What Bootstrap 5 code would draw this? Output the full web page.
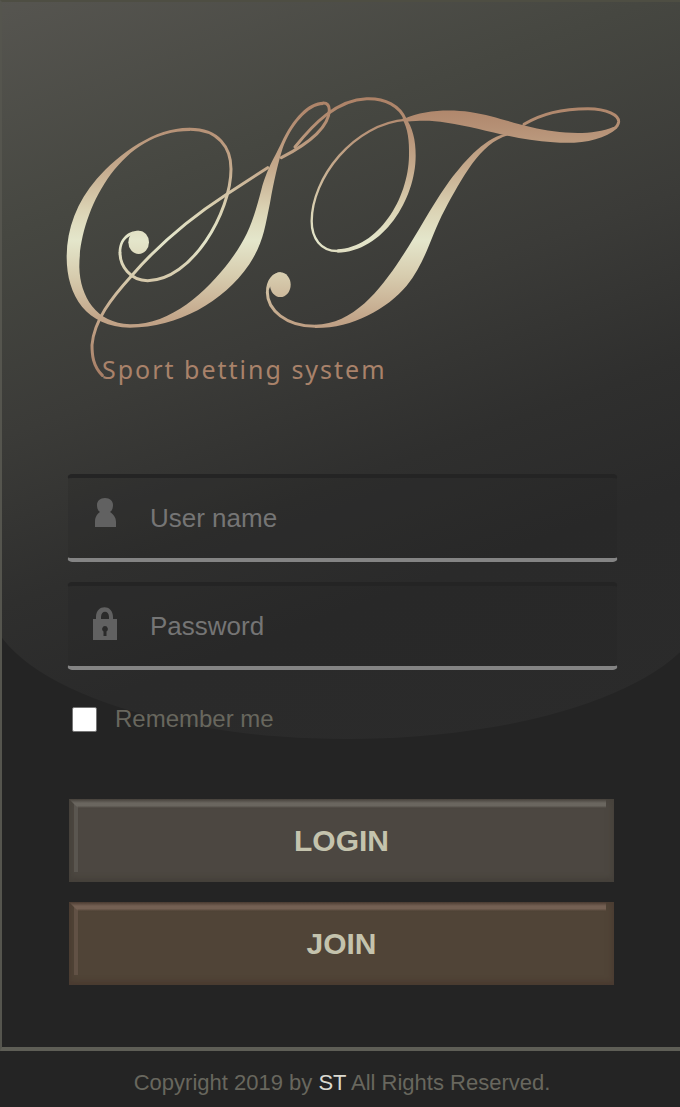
<!DOCTYPE html>
<html lang="en">
<head>
<meta charset="utf-8">
<meta name="viewport" content="width=device-width, initial-scale=1">
<title>ST - Sport betting system</title>
<link rel="stylesheet" href="https://cdn.jsdelivr.net/npm/bootstrap@5.3.0/dist/css/bootstrap.min.css">
<style>
  body { background: #242424; font-family: "Liberation Sans", Arial, sans-serif; color: #68675e; }
  .login-panel {
    isolation: isolate;
    border-left: 2px solid #55554e;
    border-top: 2px solid #4e4e43;
    border-bottom: 4px solid #5e5e56;
    padding: 92px 62px 62px 65px;
  }
  /* soft light falling from the top, ending in a wide curve */
  .login-panel::before {
    content: ""; position: absolute; z-index: -1; top: 0; left: -2%; width: 106%; height: 70.5%;
    border-radius: 0 0 50% 50% / 0 0 140px 140px;
    background: linear-gradient(160deg, #565550 0%, #464741 24%, #3b3b38 44%, #2f2f2e 61%, #2a2a2a 74%, #2b2b2b 100%);
  }
  .logo { display: block; width: 100%; max-width: 552px; height: auto; overflow: visible; }
  .tagline { font: 400 25px/32px "Noto Sans", "Open Sans", sans-serif; letter-spacing: 2px; color: #a9826a; margin: -31px 0 0 35px; }
  .fields { margin-top: 89px; gap: 20px; }
  .field {
    height: 88px; padding: 0 24px; border-radius: 5px;
    border: 1px solid transparent; border-top: 4px solid #242424; border-bottom: 4px solid #848484;
    background: rgba(36, 36, 36, .22) padding-box;
  }
  .field svg { flex: none; width: 28px; height: 36px; margin-bottom: 4px; fill: #616161; }
  .field input { font-size: 26px; line-height: 32px; color: #b5b5b5; padding: 0; margin-left: 30px; }
  .field input, .field input:focus { background: none; border: 0; box-shadow: none; }
  .field input::placeholder { color: #757575; opacity: 1; }
  .remember { margin: 35px 0 0 5px; font-size: 24px; line-height: 28px; }
  .remember input[type="checkbox"] { width: 25px; height: 25px; margin: 0; border: 1px solid #767676; border-radius: 2px; background-color: #fff; }
  .remember label { margin-left: 18px; }
  .actions { margin: 66px 4px 0 2px; gap: 20px; }
  .bevel {
    position: relative; height: 83px; border: 0; border-radius: 0;
    font-size: 30px; line-height: 36px; font-weight: 700; color: #c4c3ad;
    background: var(--face);
    box-shadow: inset 0 0 8px var(--shade), inset 0 -3px 4px var(--shade);
  }
  .bevel:hover, .bevel:active { color: #dddcc6 !important; background: var(--face) !important; }
  .bevel::before { content: ""; position: absolute; top: 0; left: 0; right: 8px; height: 9px;
    background: linear-gradient(var(--shade), var(--shine) 45%, var(--shine) 75%, transparent);
    clip-path: polygon(0 0, 100% 0, 100% 100%, 9px 100%); }
  .bevel::after { content: ""; position: absolute; top: 4px; bottom: 10px; left: 5px; width: 4px; background: var(--shine); opacity: .5; }
  .bevel-grey { --face: #4c4741; --shade: #45403a; --shine: #6a665f; }
  .bevel-brown { --face: #504437; --shade: #4a3b31; --shine: #746053; }
  .copyright { font-size: 22px; line-height: 28px; padding: 18px 0 10px; margin-left: 4px; }
  .copyright a { color: #dbdad0; }
</style>
</head>
<body>
<main class="login-panel position-relative overflow-hidden">
  <svg class="logo" viewBox="51 45 1653 870" role="img" aria-label="ST">
    <defs>
      <linearGradient id="gold" gradientUnits="userSpaceOnUse" x1="0" y1="60" x2="0" y2="890">
        <stop offset="0" stop-color="#ad8267"/><stop offset=".09" stop-color="#b48e73"/>
        <stop offset=".25" stop-color="#c5aa8d"/><stop offset=".4" stop-color="#dbd3b4"/>
        <stop offset=".51" stop-color="#e4e6cb"/><stop offset=".64" stop-color="#d7ccae"/>
        <stop offset=".8" stop-color="#c2a488"/><stop offset="1" stop-color="#a67d65"/>
      </linearGradient>
    </defs>
    <g fill="url(#gold)">
      <path d="M820 68 C775 68 728 118 694 192 C668 246 652 268 634 332 C610 425 592 476 540 545 C468 640 362 737 240 736 C138 733 90 652 88 565 C86 410 202 155 420 156 L420 146 C318 144 210 220 140 300 C80 370 50 450 50 535 C50 650 110 745 240 746 C382 746 520 670 598 556 C640 490 644 450 660 372 C672 305 684 253 698 208 C722 142 774 78 820 78Z"/>
      <path d="M1066 115 C1088 145 1097 184 1097 230 C1097 360 1000 518 862 521 L862 511 C985 505 1075 360 1077 230 C1078 185 1074 150 1057 119Z"/>
      <path d="M1062 119 C1120 94 1195 90 1260 99 C1330 110 1380 130 1445 145 C1520 163 1625 172 1690 144 L1702 147 C1660 185 1590 196 1510 190 C1390 183 1290 145 1190 131 C1142 123 1112 124 1069 128Z"/>
      <path d="M1362 166 C1300 180 1238 252 1190 318 C1138 392 1100 468 1050 542 C990 632 910 736 795 737 L795 747 C908 748 1010 690 1070 620 C1128 548 1142 472 1184 393 C1235 300 1290 192 1374 169Z"/>
      <ellipse cx="266" cy="490" rx="31" ry="35"/>
      <path d="M206 521 C206 480 232 455 266 455 L262 480 L242 470 C222 480 214 495 214 521Z"/>
      <ellipse cx="691" cy="617" rx="31" ry="37"/>
      <path d="M648 640 C648 603 668 580 692 580 L692 614 L667 618 C659 622 656 630 656 640Z"/>
    </g>
    <g fill="none" stroke="url(#gold)" stroke-width="9" stroke-linecap="round">
      <path d="M420 151 C504 151 543 205 543 270 C543 400 424 605 293 605 C240 605 210 560 210 521"/>
      <path d="M157 889 C128 860 126 826 126 798 C132 724 184 657 245 590 C330 492 420 417 528 347 L653 266"/>
      <path d="M694 236 C775 194 836 146 838 94 C838 80 832 72 820 72"/>
      <path d="M735 204 C790 135 860 62 950 59 C1006 57 1050 82 1066 122"/>
      <path d="M862 516 C812 516 785 477 785 427 C785 298 910 134 1070 122" stroke-width="7"/>
      <path d="M1422 136 C1478 101 1548 89 1614 89 C1672 90 1707 108 1706 128 C1705 139 1699 145 1690 150"/>
      <path d="M795 742 C708 742 652 692 652 640"/>
    </g>
  </svg>
  <p class="tagline">Sport betting system</p>

  <form>
    <div class="fields d-grid">
      <div class="field d-flex align-items-center">
        <svg viewBox="0 0 28 36" aria-hidden="true"><path d="M13 0 C8 0 5 3 5 7 C5 10 6 13 8 14 C5 16 3 19 3 24 V29 H24 V24 C24 19 21 16 18 14 C20 13 21 10 21 7 C21 3 18 0 13 0Z"/></svg>
        <input class="form-control" type="text" placeholder="User name" aria-label="User name" autocomplete="username">
      </div>
      <div class="field d-flex align-items-center">
        <svg viewBox="0 0 28 36" aria-hidden="true"><path fill-rule="evenodd" d="M1 13 H4 V11 C4 -2 21 -2 21 11 V13 H25 V34 H1Z M9 13 H17 V11 C17 4 9 4 9 11Z M13 20 A3 3 0 0 0 11.500 25.500 V30 H14.500 V25.500 A3 3 0 0 0 13 20Z"/></svg>
        <input class="form-control" type="password" placeholder="Password" aria-label="Password" autocomplete="current-password">
      </div>
    </div>
    <div class="remember d-flex align-items-center">
      <input class="form-check-input" type="checkbox" id="remember">
      <label for="remember">Remember me</label>
    </div>
    <div class="actions d-grid">
      <button class="btn bevel bevel-grey" type="submit">LOGIN</button>
      <button class="btn bevel bevel-brown" type="button">JOIN</button>
    </div>
  </form>
</main>
<footer class="copyright text-center">Copyright 2019 by <a class="text-decoration-none" href="#">ST</a> All Rights Reserved.</footer>
<script src="https://cdn.jsdelivr.net/npm/bootstrap@5.3.0/dist/js/bootstrap.bundle.min.js"></script>
</body>
</html>
